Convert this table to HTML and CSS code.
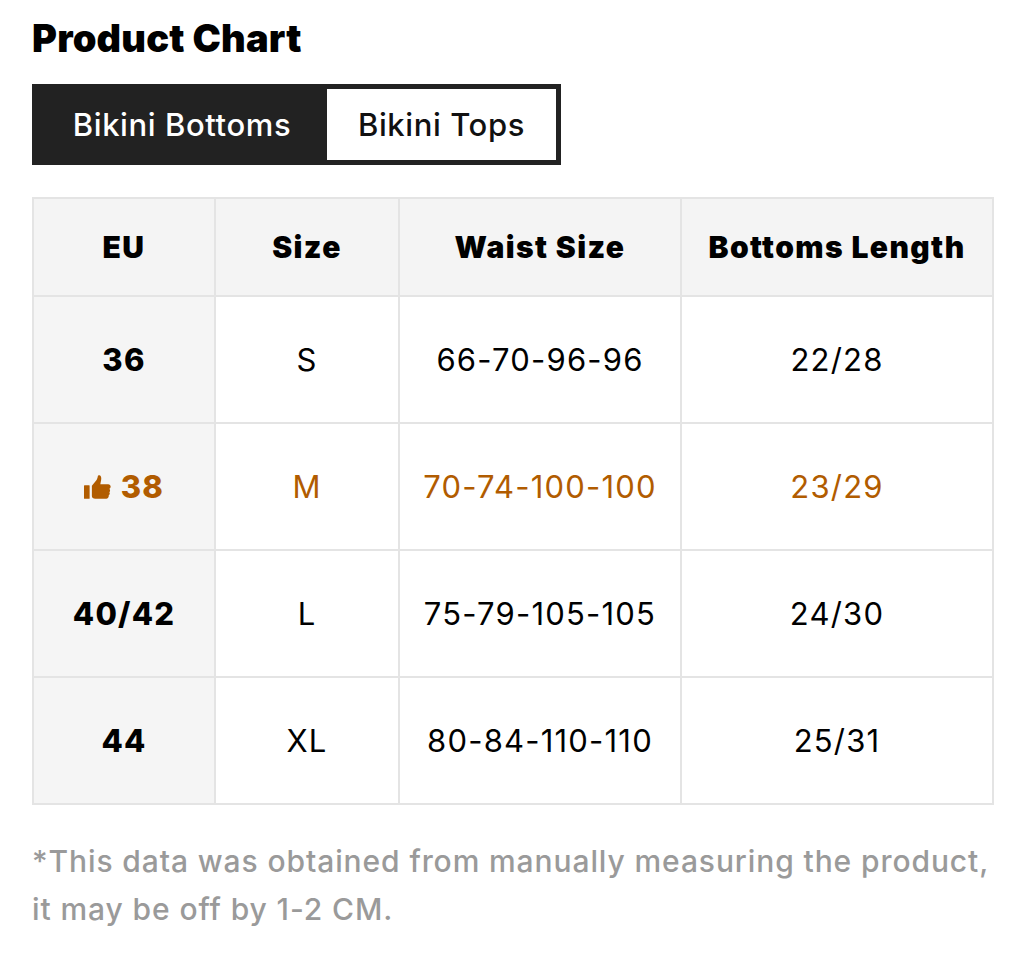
FILE: index.html
```html
<!DOCTYPE html>
<html>
<head>
<meta charset="utf-8">
<link rel="stylesheet" href="styles.css">
</head>
<body>
<div class="page">
  <h1 class="title">Product Chart</h1>
  <div class="tabs">
    <div class="tab active">Bikini Bottoms</div>
    <div class="tab">Bikini Tops</div>
  </div>
  <table class="chart">
    <colgroup>
      <col class="c1"><col class="c2"><col class="c3"><col class="c4">
    </colgroup>
    <thead>
      <tr><th>EU</th><th>Size</th><th>Waist Size</th><th>Bottoms Length</th></tr>
    </thead>
    <tbody>
      <tr><td class="eu">36</td><td>S</td><td>66-70-96-96</td><td>22/28</td></tr>
      <tr class="rec"><td class="eu"><svg class="thumb" viewBox="0 0 24 22" width="27" height="25"><rect x="0" y="9" width="5" height="12" rx="0.5"/><path d="M7 9.5 L11 4.5 C12 3 12.2 1.8 12.3 0.8 C12.4 0 13.4 -0.2 14.3 0.4 C15.6 1.4 15.6 3.5 14.8 6.5 L14.5 8 L21.5 8 C23 8 24 9.3 23.6 10.7 C23.3 11.6 22.8 12 22.4 12.2 C23.4 12.9 23.5 14.4 22.5 15.2 C23.2 16 23 17.4 21.9 18 C22.3 19.3 21.4 21 19.8 21 L10 21 C8.3 21 7 20 7 18.5 Z"/></svg>38</td><td>M</td><td>70-74-100-100</td><td>23/29</td></tr>
      <tr><td class="eu">40/42</td><td>L</td><td>75-79-105-105</td><td>24/30</td></tr>
      <tr><td class="eu">44</td><td>XL</td><td>80-84-110-110</td><td>25/31</td></tr>
    </tbody>
  </table>
  <p class="note">*This data was obtained from manually measuring the product, it may be off by 1-2 CM.</p>
</div>
</body>
</html>
```

FILE: styles.css
```css
* { box-sizing: border-box; }
html, body { margin: 0; padding: 0; background: #fff; }
body { font-family: Inter, "Noto Sans", "Liberation Sans", sans-serif; color: #000; }
.page { padding: 16px 32px 0 32px; width: 1024px; }
.title {
  margin: 0;
  font-size: 38px;
  font-weight: 900;
  line-height: 44px;
  letter-spacing: 0.2px;
}
.tabs {
  display: inline-flex;
  margin-top: 24px;
  background: #222;
  border: 5px solid #222;
  height: 81px;
}
.tab {
  display: flex;
  align-items: center;
  justify-content: center;
  font-size: 31px;
  font-weight: 500;
  letter-spacing: 0.6px;
  color: #111;
  background: #fff;
  width: 229px;
}
.tab.active {
  background: #222;
  color: #fff;
  width: 290px;
}
.chart {
  margin-top: 32px;
  width: 960px;
  border-collapse: collapse;
  table-layout: fixed;
  border: 2px solid #e4e4e4;
}
.c1 { width: 182px; }
.c2 { width: 184px; }
.c3 { width: 282px; }
.c4 { width: 312px; }
.chart th, .chart td {
  border: 2px solid #e4e4e4;
  text-align: center;
  font-size: 31px;
  letter-spacing: 1.2px;
}
.chart th {
  background: #f4f4f4;
  font-size: 30px;
  font-weight: 900;
  letter-spacing: 1.4px;
  height: 98px;
}
.chart td {
  height: 127px;
  font-weight: 400;
}
.chart td.eu {
  background: #f5f5f5;
  font-weight: 800;
}
.chart tr.rec td { color: #b15c00; }
.thumb {
  fill: #b15c00;
  vertical-align: -2px;
  margin-right: 10px;
}
.note {
  margin: 32px 0 0 0;
  color: #9a9a9a;
  font-size: 30px;
  font-weight: 500;
  line-height: 48px;
  letter-spacing: 0.9px;
}
```
